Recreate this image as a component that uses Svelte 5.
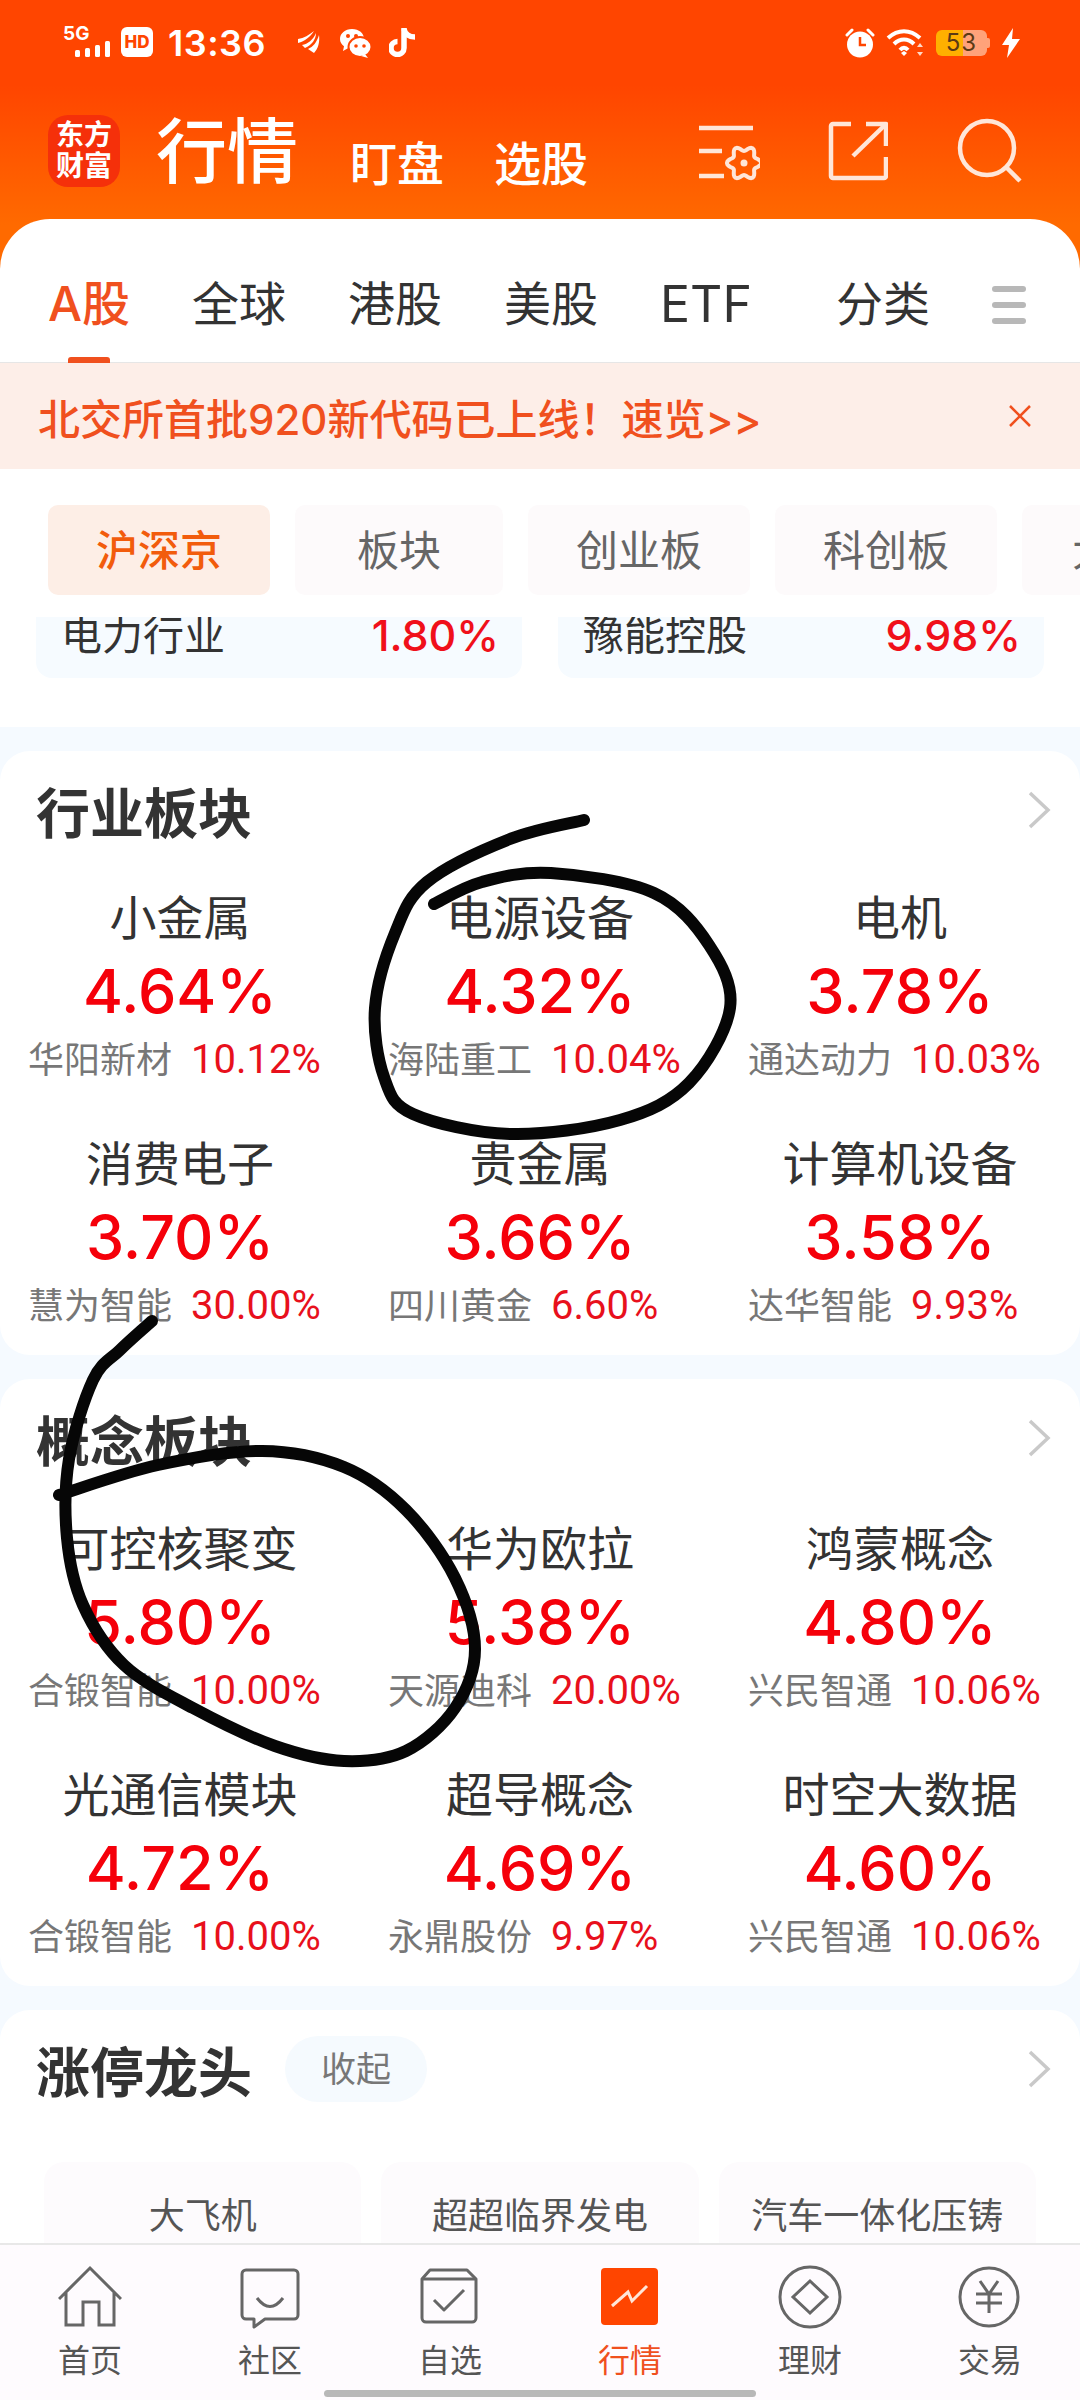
<script>
  const industry = [
    { n: '小金属', v: '4.64%', s: '华阳新材', p: '10.12%' },
    { n: '电源设备', v: '4.32%', s: '海陆重工', p: '10.04%' },
    { n: '电机', v: '3.78%', s: '通达动力', p: '10.03%' },
    { n: '消费电子', v: '3.70%', s: '慧为智能', p: '30.00%' },
    { n: '贵金属', v: '3.66%', s: '四川黄金', p: '6.60%' },
    { n: '计算机设备', v: '3.58%', s: '达华智能', p: '9.93%' }
  ];
  const concept = [
    { n: '可控核聚变', v: '5.80%', s: '合锻智能', p: '10.00%' },
    { n: '华为欧拉', v: '5.38%', s: '天源迪科', p: '20.00%' },
    { n: '鸿蒙概念', v: '4.80%', s: '兴民智通', p: '10.06%' },
    { n: '光通信模块', v: '4.72%', s: '合锻智能', p: '10.00%' },
    { n: '超导概念', v: '4.69%', s: '永鼎股份', p: '9.97%' },
    { n: '时空大数据', v: '4.60%', s: '兴民智通', p: '10.06%' }
  ];
  const sections = [
    { title: '行业板块', items: industry, wide: false },
    { title: '概念板块', items: concept, wide: true }
  ];
  const tabs = ['全球', '港股', '美股', 'ETF'];
  const chips = ['板块', '创业板', '科创板'];

  function smooth(pts) {
    let d = `M${pts[0][0]} ${pts[0][1]}`;
    for (let i = 0; i < pts.length - 1; i++) {
      const p0 = pts[Math.max(i - 1, 0)], p1 = pts[i], p2 = pts[i + 1], p3 = pts[Math.min(i + 2, pts.length - 1)];
      const c1 = [p1[0] + (p2[0] - p0[0]) / 6, p1[1] + (p2[1] - p0[1]) / 6];
      const c2 = [p2[0] - (p3[0] - p1[0]) / 6, p2[1] - (p3[1] - p1[1]) / 6];
      d += `C${c1[0].toFixed(1)} ${c1[1].toFixed(1)} ${c2[0].toFixed(1)} ${c2[1].toFixed(1)} ${p2[0]} ${p2[1]}`;
    }
    return d;
  }
  const inkA = smooth([[584,820],[510,839],[427,882],[395,933],[375,1008],[384,1077],[413,1114],[510,1134],[620,1120],[689,1083],[730,1008],[709,945],[654,893],[551,873],[482,882],[434,904]]);
  const inkB = smooth([[152,1321],[120,1350],[93,1380],[69,1459],[67,1538],[83,1605],[124,1665],[193,1708],[275,1746],[344,1761],[406,1751],[455,1708],[475,1649],[455,1578],[406,1510],[344,1467],[262,1451],[158,1465],[59,1495]]);

  let gear = '';
  for (let i = 0; i <= 72; i++) {
    const t = (i / 72) * Math.PI * 2;
    const r = 14.5 + 2.5 * Math.cos(6 * t);
    gear += `${i ? 'L' : 'M'}${(46 + r * Math.cos(t)).toFixed(2)} ${(42 + r * Math.sin(t)).toFixed(2)}`;
  }
</script>

<div class="root">
  <div class="top">
    <div class="status">
      <div class="net">
        <span class="fiveg">5G</span>
        <svg class="bars" width="36" height="16" viewBox="0 0 36 16"><rect x="0" y="9" width="5" height="7" rx="1.5"/><rect x="10" y="7" width="5" height="9" rx="1.5"/><rect x="20" y="4" width="5" height="12" rx="1.5"/><rect x="30" y="0" width="5" height="16" rx="1.5"/></svg>
      </div>
      <span class="hd">HD</span>
      <span class="time">13:36</span>
      <svg class="s-a" width="24" height="24" viewBox="0 0 24 24" fill="#fff"><path d="M1 9 C7 8 12 5 17 1 C13 7 8 11 1 13Z"/><path d="M5 15 C11 14 16 10 19 3 C19 9 15 15 8 18Z"/><path d="M11 19 C16 17 20 12 22 5 C23 12 21 19 17 23Z"/></svg>
      <svg class="s-b" width="32" height="32" viewBox="0 0 32 32"><path fill="#fff" d="M13 2C6 2 1 6.500 1 12c0 3 1.500 5.500 4 7.300L4 24l5-2.700c1.300.4 2.600.6 4 .6 7 0 12-4.400 12-10S20 2 13 2z"/><ellipse cx="21" cy="20" rx="11.500" ry="10" fill="#fff" stroke="#ff4500" stroke-width="2"/><circle cx="9" cy="9" r="2" fill="#ff4500"/><circle cx="17" cy="9" r="2" fill="#ff4500"/><circle cx="17" cy="19" r="1.800" fill="#ff4500"/><circle cx="25" cy="19" r="1.800" fill="#ff4500"/><path fill="#fff" d="M26 27l3 4-7-2z"/></svg>
      <svg class="s-c" width="28" height="30" viewBox="0 0 28 30" fill="none" stroke="#fff" stroke-width="5.500"><path d="M15 1V21a6.500 6.500 0 1 1-6.500-6.500"/><path d="M15 2c1 5 5 8 11 8"/></svg>
      <div class="status-right">
        <svg width="30" height="30" viewBox="0 0 30 30"><circle cx="15" cy="16.500" r="13" fill="#fff"/><path d="M15 9V17H21" fill="none" stroke="#ff4500" stroke-width="2.500"/><path d="M2 7L7 2M28 7L23 2" stroke="#fff" stroke-width="3" stroke-linecap="round"/></svg>
        <svg class="wifi" width="40" height="28" viewBox="0 0 40 28" fill="none" stroke="#fff" stroke-width="4"><path d="M2 9C12 0 24 0 34 9"/><path d="M8 15C14 9 22 9 28 15"/><path d="M14 21C16.500 18 19.500 18 22 21"/><path d="M18 27l-3-3 3-2 3 2z" fill="#fff" stroke="none"/><path d="M34 14l3 4h-6zM34 27l-3-4h6z" fill="#ffd9c8" stroke="none"/></svg>
        <div class="battery">
          <span class="level">53</span>
          <i class="nub"></i>
        </div>
        <svg class="bolt" width="18" height="30" viewBox="0 0 18 30"><path fill="#fff" d="M11 0L0 17H7L5 30 18 11H10Z"/></svg>
      </div>
    </div>

    <div class="bar">
      <div class="logo"><span>东方</span><span>财富</span></div>
      <span class="bar-main">行情</span>
      <span class="bar-sub">盯盘</span>
      <span class="bar-sub second">选股</span>
      <div class="bar-icons">
        <svg width="62" height="60" viewBox="0 0 62 60" fill="none" stroke="#ffe6d8" stroke-width="4.500">
          <path d="M1 7H55M1 30H24M1 55H26"/>
          <path d={gear} stroke-width="4"/>
          <circle cx="46" cy="42" r="3.500" fill="#ffe6d8" stroke="none"/>
        </svg>
        <svg class="share" width="60" height="60" viewBox="0 0 60 60" fill="none" stroke="#ffe6d8" stroke-width="4.500" stroke-linejoin="round">
          <path d="M23 3H5a2 2 0 0 0-2 2V55a2 2 0 0 0 2 2H56a2 2 0 0 0 2-2V36"/>
          <path d="M38 3H58V25"/>
          <path d="M25 35L58 3"/>
        </svg>
        <svg class="search" width="70" height="66" viewBox="0 0 70 66" fill="none" stroke="#ffe6d8" stroke-width="4.500">
          <circle cx="32" cy="30" r="27"/>
          <path d="M51 49L65 63"/>
        </svg>
      </div>
    </div>

    <div class="sheet">
      <div class="tabs">
        <span class="tab active">A股</span>
        {#each tabs as t}<span class="tab" class:latin={t === 'ETF'}>{t}</span>{/each}
        <span class="tab last">分类</span>
        <span class="menu"><i></i><i></i><i></i></span>
      </div>
      <div class="banner">
        <span>北交所首批920新代码已上线！速览&gt;&gt;</span>
        <svg width="26" height="26" viewBox="0 0 26 26" fill="none" stroke="#f0501e" stroke-width="2.500"><path d="M3 3L23 23M23 3L3 23"/></svg>
      </div>

      <div class="overview">
        <div class="chips">
          <span class="chip on">沪深京</span>
          {#each chips as c}<span class="chip">{c}</span>{/each}
          <span class="chip cut">大盘</span>
        </div>
        <div class="clip">
          <div class="mini"><span>电力行业</span><b>1.80%</b></div>
          <div class="mini"><span>豫能控股</span><b>9.98%</b></div>
        </div>
      </div>
    </div>
  </div>

  {#each sections as sec}
    <section class="card">
      <header class="card-head">
        <h2>{sec.title}</h2>
        <svg class="chev" width="24" height="38" viewBox="0 0 24 38" fill="none" stroke="#c9c9c9" stroke-width="3.500"><path d="M3 2L21 19L3 36"/></svg>
      </header>
      <div class="grid" class:wide={sec.wide}>
        {#each sec.items as it}
          <div class="cell">
            <div class="name">{it.n}</div>
            <div class="val">{it.v}</div>
            <div class="sub"><span>{it.s}</span><b>{it.p}</b></div>
          </div>
        {/each}
      </div>
    </section>
  {/each}

  <section class="card leaders">
    <header class="card-head">
      <h2>涨停龙头</h2>
      <span class="pill">收起</span>
      <svg class="chev" width="24" height="38" viewBox="0 0 24 38" fill="none" stroke="#c9c9c9" stroke-width="3.500"><path d="M3 2L21 19L3 36"/></svg>
    </header>
    <div class="leader-row">
      <div class="leader">大飞机</div>
      <div class="leader">超超临界发电</div>
      <div class="leader">汽车一体化压铸</div>
    </div>
  </section>

  <nav class="nav">
    <div class="nav-item">
      <svg width="64" height="64" viewBox="0 0 64 64" fill="none" stroke="#666" stroke-width="3"><path d="M1 34L32 3L63 34M8 27V60H25V37H41V60H56V27"/></svg>
      <span>首页</span>
    </div>
    <div class="nav-item">
      <svg width="64" height="64" viewBox="0 0 64 64" fill="none" stroke="#666" stroke-width="3" stroke-linejoin="round"><path d="M8 5H56a4 4 0 0 1 4 4V50a4 4 0 0 1-4 4H27L16 62V54H8a4 4 0 0 1-4-4V9a4 4 0 0 1 4-4z"/><path d="M19 33Q32 50 45 33"/></svg>
      <span>社区</span>
    </div>
    <div class="nav-item">
      <svg width="64" height="64" viewBox="0 0 64 64" fill="none" stroke="#666" stroke-width="3" stroke-linejoin="round"><path d="M12 5H49L58 14V53a4 4 0 0 1-4 4H8a4 4 0 0 1-4-4V14z"/><path d="M4 14H58"/><path d="M16 35L26 45L46 25"/></svg>
      <span>自选</span>
    </div>
    <div class="nav-item on">
      <svg width="64" height="64" viewBox="0 0 64 64" fill="none"><rect x="3" y="3" width="57" height="57" rx="4" fill="#ff4500"/><path d="M14 41L30 27L34 36L49 21" stroke="#ffe6d8" stroke-width="3"/></svg>
      <span>行情</span>
    </div>
    <div class="nav-item">
      <svg width="64" height="64" viewBox="0 0 64 64" fill="none" stroke="#666" stroke-width="3"><circle cx="32" cy="32" r="30"/><path d="M32 16L49 32L32 48L15 32Z"/></svg>
      <span>理财</span>
    </div>
    <div class="nav-item">
      <svg width="64" height="64" viewBox="0 0 64 64" fill="none" stroke="#666" stroke-width="3"><circle cx="31" cy="32" r="29"/><path d="M22 16L31 29L40 16M18 29H44M18 38H44M31 29V48"/></svg>
      <span>交易</span>
    </div>
    <i class="home-bar"></i>
  </nav>

  <svg class="ink" width="1080" height="2400" viewBox="0 0 1080 2400" fill="none" stroke="#060606" stroke-width="12" stroke-linecap="round" stroke-linejoin="round">
    <path d={inkA}/>
    <path d={inkB}/>
  </svg>
</div>

<style>
  :global(body) {
    margin: 0;
  }
  .root {
    position: relative;
    width: 1080px;
    height: 2400px;
    overflow: hidden;
    background: #f5faff;
    font-family: Inter, "Noto Sans CJK SC", sans-serif;
    color: #333;
  }
  .top {
    background: linear-gradient(#ff4500 0, #ff4500 85px, #ff6a00 225px, #ff6a00 280px) no-repeat;
    background-size: 100% 280px;
  }
  .status {
    height: 86px;
    display: flex;
    align-items: center;
    padding: 0 60px 0 63px;
    color: #fff;
  }
  .net {
    width: 48px;
    height: 30px;
    position: relative;
  }
  .fiveg {
    position: absolute;
    left: 0;
    top: -4px;
    font-size: 19px;
    font-weight: 700;
    line-height: 20px;
  }
  .bars {
    position: absolute;
    left: 12px;
    top: 13px;
    fill: #fff;
  }
  .hd {
    width: 32px;
    height: 30px;
    margin-left: 10px;
    margin-top: -2px;
    border-radius: 6px;
    background: #fff;
    color: #ff4500;
    font-size: 17px;
    font-weight: 800;
    line-height: 30px;
    text-align: center;
  }
  .time {
    margin-left: 15px;
    font-size: 36px;
    font-weight: 600;
    letter-spacing: 0.5px;
  }
  .s-a { margin-left: 31px; margin-top: -2px; }
  .s-b { margin-left: 18px; margin-top: -1px; }
  .s-c { margin-left: 18px; margin-top: -3px; }
  .status-right {
    margin-left: auto;
    display: flex;
    align-items: center;
  }
  .wifi { margin-left: 11px; }
  .battery {
    position: relative;
    width: 54px;
    height: 26px;
    margin-left: 10px;
  }
  .level {
    display: block;
    width: 51px;
    height: 26px;
    border-radius: 6px;
    background: linear-gradient(90deg, #ffb000 0, #ffb000 27px, #ffa27a 27px);
    color: #5b3a14;
    font-size: 24px;
    line-height: 26px;
    text-align: center;
    letter-spacing: 1px;
  }
  .nub {
    position: absolute;
    right: 0;
    top: 8px;
    width: 3px;
    height: 10px;
    border-radius: 0 2px 2px 0;
    background: #ffa27a;
  }
  .bolt { margin-left: 12px; }

  .bar {
    height: 102px;
    margin-top: 14px;
    margin-bottom: 17px;
    padding: 0 55px 0 48px;
    display: flex;
    align-items: center;
    color: #fff;
  }
  .logo {
    width: 72px;
    height: 72px;
    border-radius: 20px;
    background: #f5300a;
    display: flex;
    flex-direction: column;
    align-items: center;
    justify-content: center;
    font-size: 28px;
    font-weight: 700;
    line-height: 31px;
    color: #fff;
  }
  .bar-main {
    margin-left: 36px;
    font-size: 71px;
    font-weight: 500;
    line-height: 84px;
  }
  .bar-sub {
    margin-left: 52px;
    margin-top: 26px;
    font-size: 47px;
    font-weight: 500;
    line-height: 60px;
  }
  .bar-sub.second { margin-left: 50px; }
  .bar-icons {
    margin-left: auto;
    display: flex;
    align-items: center;
  }
  .share { margin-left: 68px; }
  .search { margin-left: 67px; }

  .sheet {
    border-radius: 50px 50px 0 0;
    background: #fff;
  }
  .tabs {
    position: relative;
    height: 143px;
    padding: 0 54px 0 48px;
    border-bottom: 1px solid #e6e6e6;
    display: flex;
    align-items: center;
    gap: 62px;
    font-size: 47px;
    line-height: 60px;
    box-sizing: content-box;
  }
  .tab {
    position: relative;
    top: 13px;
    white-space: nowrap;
    color: #333;
  }
  .tab.active {
    color: #f0501e;
    font-size: 48px;
    font-weight: 500;
  }
  .tab.latin { font-size: 50px; }
  .tab.active::after {
    content: "";
    position: absolute;
    left: 20px;
    top: 83px;
    width: 42px;
    height: 6px;
    border-radius: 3px 3px 0 0;
    background: #f0501e;
  }
  .tab.last { margin-left: 22px; }
  .menu {
    margin-left: auto;
    position: relative;
    top: 14px;
    width: 36px;
    display: flex;
    flex-direction: column;
    gap: 10px;
  }
  .menu i {
    display: block;
    height: 6px;
    border-radius: 3px;
    background: #b8b8b8;
  }
  .banner {
    height: 106px;
    padding: 0 47px 0 38px;
    background: #fdeee8;
    color: #f0501e;
    font-size: 42px;
    font-weight: 500;
    display: flex;
    align-items: center;
    justify-content: space-between;
  }
  .overview {
    border-radius: 0 0 30px 30px;
    background: #fff;
    padding-top: 36px;
    height: 222px;
    margin-bottom: 24px;
  }
  .chips {
    display: flex;
    gap: 25px;
    padding-left: 48px;
    overflow: hidden;
  }
  .chip {
    flex: none;
    width: 208px;
    height: 90px;
    border-radius: 10px;
    background: #fdfafb;
    color: #666;
    font-size: 42px;
    line-height: 92px;
    text-align: center;
  }
  .chip:nth-child(n+3) { width: 222px; }
  .chip.on {
    width: 222px;
    background: #fdeee6;
    color: #f25c0c;
    font-weight: 500;
  }
  .chip.cut {
    text-align: left;
    padding-left: 50px;
  }
  .clip {
    margin-top: 22px;
    padding: 0 36px;
    height: 61px;
    overflow: hidden;
    display: flex;
    gap: 36px;
  }
  .mini {
    flex: 1;
    height: 61px;
    border-radius: 0 0 16px 16px;
    background: #f6fbff;
    padding: 0 23px 0 25px;
    display: flex;
    justify-content: space-between;
    align-items: flex-start;
    font-size: 41px;
    line-height: 36px;
    color: #333;
  }
  .mini b {
    font-weight: 500;
    color: #f0101a;
    font-size: 43px;
  }

  .card {
    margin-bottom: 24px;
    border-radius: 30px;
    background: #fff;
  }
  .card-head {
    height: 118px;
    padding: 0 29px 0 36px;
    display: flex;
    align-items: center;
  }
  .card-head h2 {
    margin: 0;
    font-size: 54px;
    font-weight: 700;
    color: #333;
  }
  .chev { margin-left: auto; }
  .grid {
    display: grid;
    grid-template-columns: repeat(3, 360px);
    row-gap: 48px;
    padding: 18px 0 24px;
  }
  .grid.wide { padding-top: 21px; }
  .cell {
    text-align: center;
    min-width: 0;
  }
  .name {
    height: 60px;
    font-size: 47px;
    line-height: 62px;
    color: #333;
  }
  .val {
    height: 88px;
    font-size: 61px;
    font-weight: 500;
    line-height: 88px;
    color: #f5000a;
  }
  .sub {
    height: 50px;
    padding-left: 28px;
    display: flex;
    gap: 19px;
    font-size: 36px;
    line-height: 50px;
    color: #777;
    white-space: nowrap;
  }
  .sub b {
    font-family: Roboto, sans-serif;
    font-weight: 400;
    font-size: 40px;
    color: #e8101c;
  }

  .leaders {
    margin-bottom: 0;
    height: 400px;
  }
  .pill {
    margin-left: 33px;
    width: 142px;
    height: 66px;
    border-radius: 33px;
    background: #f5fafe;
    color: #777;
    font-size: 35px;
    line-height: 66px;
    text-align: center;
  }
  .leader-row {
    margin-top: 34px;
    padding: 0 44px;
    display: flex;
    gap: 20px;
  }
  .leader {
    flex: 1;
    height: 150px;
    border-radius: 20px;
    background: #fdfbfd;
    font-size: 36px;
    line-height: 108px;
    text-align: center;
    color: #555;
    white-space: nowrap;
  }

  .nav {
    position: absolute;
    left: 0;
    right: 0;
    bottom: 0;
    padding-top: 20px;
    box-sizing: content-box;
    height: 135px;
    border-top: 2px solid #e8e8e8;
    background: #fefbfe;
    display: grid;
    grid-template-columns: repeat(6, 180px);
    justify-items: center;
    align-items: start;
  }
  .nav-item {
    display: flex;
    flex-direction: column;
    align-items: center;
    font-size: 32px;
    line-height: 44px;
    color: #555;
  }
  .nav-item span { margin-top: 10px; }
  .nav-item.on { color: #f0501e; }
  .home-bar {
    position: absolute;
    left: 324px;
    bottom: 3px;
    width: 432px;
    height: 7px;
    border-radius: 4px;
    background: #b8b8b8;
  }
  .ink {
    position: absolute;
    left: 0;
    top: 0;
    pointer-events: none;
  }
</style>
